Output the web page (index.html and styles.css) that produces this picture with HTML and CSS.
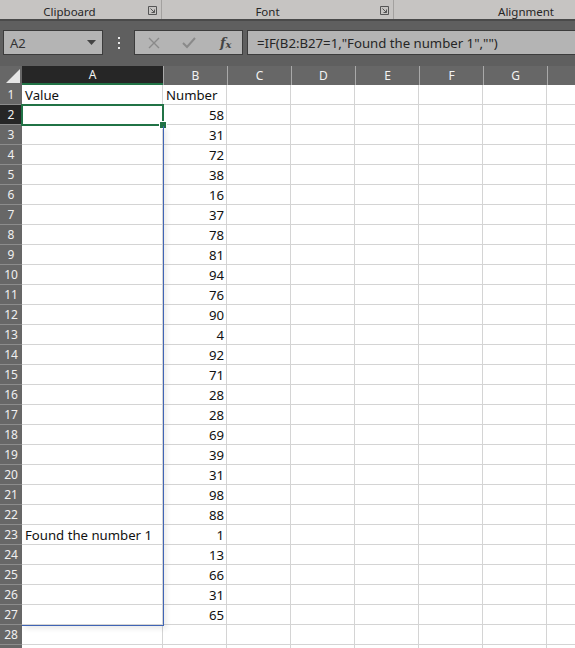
FILE: index.html
```html
<!DOCTYPE html>
<html>
<head>
<meta charset="utf-8">
<link rel="stylesheet" href="styles.css">
</head>
<body>
<div class="app">
  <div class="ribbon">
    <div class="group g-clip"><span class="glabel">Clipboard</span><span class="launch"><svg width="9" height="9" viewBox="0 0 9 9"><path d="M0.5 0.5H8.5V8.5H0.5Z" fill="none" stroke="#555" stroke-width="1"/><path d="M2.5 2.5L6.5 6.5M6.5 3.5V6.5H3.5" fill="none" stroke="#555" stroke-width="1"/></svg></span></div>
    <div class="group g-font"><span class="glabel">Font</span><span class="launch"><svg width="9" height="9" viewBox="0 0 9 9"><path d="M0.5 0.5H8.5V8.5H0.5Z" fill="none" stroke="#555" stroke-width="1"/><path d="M2.5 2.5L6.5 6.5M6.5 3.5V6.5H3.5" fill="none" stroke="#555" stroke-width="1"/></svg></span></div>
    <div class="group g-align"><span class="glabel">Alignment</span></div>
  </div>
  <div class="fbar">
    <div class="namebox"><span>A2</span><svg width="9" height="5" viewBox="0 0 9 5"><path d="M0 0H9L4.5 5Z" fill="#444"/></svg></div>
    <div class="dots"><i></i><i></i><i></i></div>
    <div class="fbtns">
      <svg class="ic" width="12" height="12" viewBox="0 0 12 12"><path d="M1 1L11 11M11 1L1 11" stroke="#8a8a8a" stroke-width="1.4"/></svg>
      <svg class="ic" width="14" height="12" viewBox="0 0 14 12"><path d="M1 6L5 10L13 1" fill="none" stroke="#8a8a8a" stroke-width="2"/></svg>
      <span class="fx">f<sub>x</sub></span>
    </div>
    <div class="formula">=IF(B2:B27=1,"Found the number 1","")</div>
  </div>
  <div class="sheet" id="sheet">
    <div class="corner"><svg width="14" height="14" viewBox="0 0 14 14"><path d="M14 0V14H0Z" fill="#e6e6e6"/></svg></div>
    <div class="ch sel">A</div>
    <div class="ch">B</div>
    <div class="ch">C</div>
    <div class="ch">D</div>
    <div class="ch">E</div>
    <div class="ch">F</div>
    <div class="ch">G</div>
    <div class="ch last"></div>
  </div>
  <div class="selbox"><span class="handle"></span></div>
  <div class="spill"></div>
</div>
<script>
const nums=[null,58,31,72,38,16,37,78,81,94,76,90,4,92,71,28,28,69,39,31,98,88,1,13,66,31,65];
const s=document.getElementById('sheet');
let h='';
for(let r=1;r<=29;r++){
  h+='<div class="rh'+(r===2?' sel':'')+'">'+(r<=28?r:'')+'</div>';
  let a='',b='';
  if(r===1){a='Value';b='Number';}
  else if(r<=27){b=nums[r-1]; if(r===23)a='Found the number 1';}
  h+='<div class="c ca">'+a+'</div>';
  h+='<div class="c '+(r===1?'ca':'num')+'">'+b+'</div>';
  for(let k=0;k<5;k++)h+='<div class="c"></div>';
  h+='<div class="c last"></div>';
}
s.insertAdjacentHTML('beforeend',h);
</script>
</body>
</html>
```
FILE: styles.css
```css
html,body{margin:0;padding:0;}
body{width:575px;height:648px;overflow:hidden;background:#fff;}
.app{position:relative;width:575px;height:648px;overflow:hidden;}
.ribbon{height:19px;background:#c6c4c2;display:flex;font-family:"Noto Sans","Open Sans",sans-serif;font-size:11.5px;color:#262626;border-bottom:2px solid #4a4a4a;}
.group{position:relative;display:flex;align-items:center;justify-content:center;height:19px;box-sizing:border-box;padding-top:3px;}
.g-clip{width:162px;border-right:1px solid #a3a19f;}
.g-font{width:232px;border-right:1px solid #a3a19f;}
.g-align{flex:1;justify-content:flex-end;padding-right:21px;}
.g-clip .glabel{margin-right:22px;}
.g-font .glabel{margin-right:20px;}
.launch{position:absolute;right:4px;top:6px;display:flex;}
.fbar{height:45px;background:#5f5f5f;display:flex;align-items:flex-start;padding-top:9px;box-sizing:border-box;}
.namebox{margin-left:3px;width:100px;height:25px;box-sizing:border-box;background:#b4b4b4;border:1px solid #3c3c3c;display:flex;align-items:center;justify-content:space-between;padding:0 6px 0 6px;font-family:"Noto Sans","Open Sans",sans-serif;font-size:13px;color:#333;}
.namebox svg{margin-top:-1px;}
.dots{width:31px;height:25px;display:flex;flex-direction:column;align-items:center;justify-content:center;gap:3px;}
.dots i{display:block;width:2px;height:2px;background:#e8e8e8;}
.fbtns{width:109px;height:25px;box-sizing:border-box;background:#b4b4b4;border:1px solid #3c3c3c;display:flex;align-items:center;padding-left:13px;gap:22px;}
.fx{font-family:"DejaVu Serif","Liberation Serif",serif;font-style:italic;font-weight:bold;font-size:13px;color:#444;margin-left:2px;}
.fx sub{font-size:10px;vertical-align:-1px;}
.formula{margin-left:4px;flex:1;height:25px;box-sizing:border-box;background:#b4b4b4;border:1px solid #3c3c3c;border-right:none;display:flex;align-items:center;padding-left:9px;font-family:"Noto Sans","Open Sans",sans-serif;font-size:13.2px;color:#262626;white-space:nowrap;}
.sheet{display:grid;grid-template-columns:22px 141px repeat(6,64px) 28px;grid-template-rows:19px;grid-auto-rows:20px;font-family:"Noto Sans","Open Sans",sans-serif;}
.corner{background:#676767;display:flex;align-items:flex-end;justify-content:flex-end;padding:0 2px 2px 0;box-sizing:border-box;}
.ch{background:#676767;color:#f2f2f2;font-size:12px;display:flex;align-items:center;justify-content:center;box-sizing:border-box;border-left:1px solid #a9a9a9;}
.ch.sel{background:#262626;border-left:none;border-bottom:2px solid #217346;}
.rh{background:#676767;color:#f0f0f0;font-size:12px;display:flex;align-items:center;justify-content:center;box-sizing:border-box;border-bottom:1px solid #8c8c8c;}
.rh.sel{background:#262626;}
.c{box-sizing:border-box;border-right:1px solid #d4d4d4;border-bottom:1px solid #d4d4d4;font-size:13.2px;color:#111;display:flex;align-items:flex-end;padding:0 2px 0 3px;white-space:nowrap;overflow:visible;line-height:17px;}
.c.num{justify-content:flex-end;}
.c.last{border-right:none;}
.selbox{position:absolute;left:21px;top:104px;width:143px;height:22px;box-sizing:border-box;border:2px solid #217346;}
.handle{position:absolute;right:-5px;bottom:-5px;width:6px;height:6px;background:#217346;border:1px solid #fff;}
.spill{position:absolute;left:22px;top:126px;width:142px;height:500px;box-sizing:border-box;border-right:1px solid #3f64b5;border-bottom:1px solid #3f64b5;box-shadow:3px 3px 5px rgba(0,0,0,0.08);pointer-events:none;}
```
